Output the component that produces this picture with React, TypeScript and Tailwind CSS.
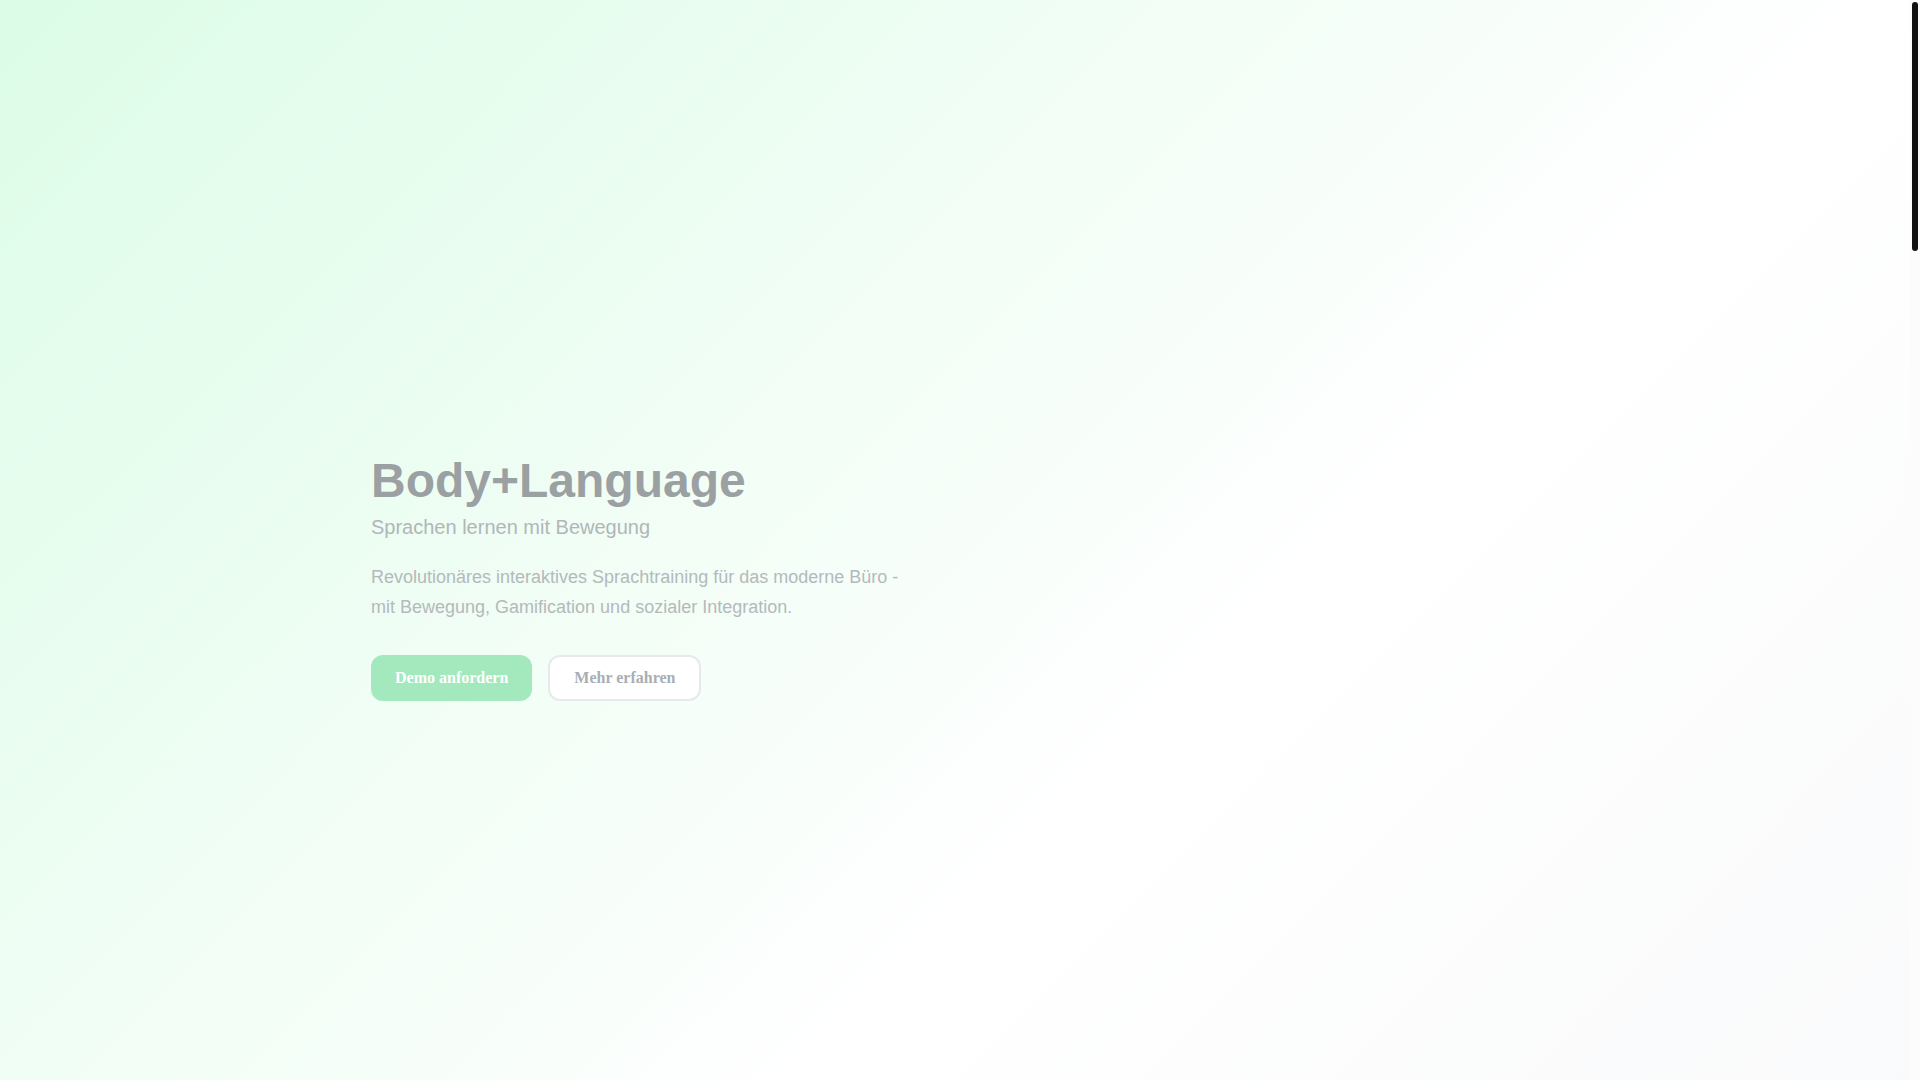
export default function App() {
  return (
    <div className="flex h-screen w-full bg-[#fcfcfd]" style={{ fontFamily: '"Liberation Sans", Arial, sans-serif' }}>
      <main className="flex-1 overflow-y-auto">
        {/* hero */}
        <section className="flex h-[1080px] items-center bg-[linear-gradient(135deg,#dcfce7_0%,#ffffff_64%,#f9fafb_100%)] pt-[77px]">
          <div className="mx-auto w-full max-w-[1280px] px-14">
            <div className="max-w-[544px]">
              <h1 className="mb-[8px] text-5xl leading-none font-bold text-[#9ba0a3]">Body+Language</h1>
              <p className="text-xl leading-7 text-[#b1b6b9]">Sprachen lernen mit Bewegung</p>
              <p className="mt-[21px] text-lg leading-[30px] text-[#b4b9bc]">
                Revolutionäres interaktives Sprachtraining für das moderne Büro - mit Bewegung, Gamification und
                sozialer Integration.
              </p>
              <div className="mt-[33px] flex gap-4" style={{ fontFamily: '"Liberation Serif", "Times New Roman", serif' }}>
                <button className="flex h-[46px] items-center rounded-xl bg-[#a3e9bd] px-6 text-base font-bold text-white">
                  Demo anfordern
                </button>
                <button className="flex h-[46px] items-center rounded-xl border-2 border-[#e7e9ec] bg-white px-6 text-base font-bold text-[#a9aeb5]">
                  Mehr erfahren
                </button>
              </div>
            </div>
          </div>
        </section>
        {/* rest of the page, not yet faded in */}
        <div className="h-[3550px] bg-[#fcfcfd]" />
      </main>
      {/* scroll rail */}
      <aside className="flex w-[10px] shrink-0 justify-center bg-[#fcfcfd]">
        <div className="mt-[2px] h-[249px] w-[6px] rounded-full bg-[#111111]" />
      </aside>
    </div>
  )
}
